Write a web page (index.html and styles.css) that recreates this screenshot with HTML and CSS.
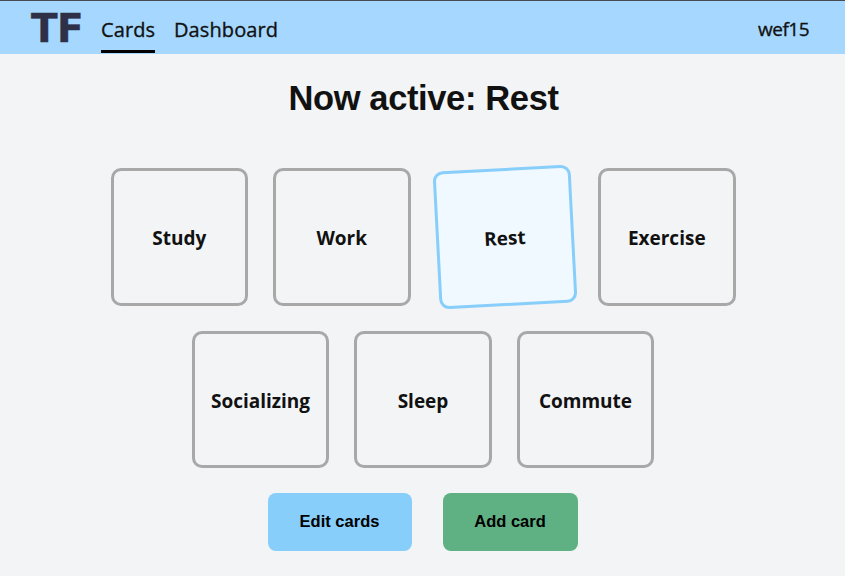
FILE: index.html
```html
<!DOCTYPE html>
<html lang="en">
<head>
<meta charset="utf-8">
<title>Cards</title>
<link rel="stylesheet" href="styles.css">
</head>
<body>
<header class="navbar">
  <a class="logo">TF</a>
  <nav class="links">
    <a class="link active">Cards</a>
    <a class="link">Dashboard</a>
  </nav>
  <span class="user">wef15</span>
</header>
<main>
  <h1>Now active: Rest</h1>
  <section class="cards">
    <div class="card">Study</div>
    <div class="card">Work</div>
    <div class="card selected">Rest</div>
    <div class="card">Exercise</div>
    <div class="card">Socializing</div>
    <div class="card">Sleep</div>
    <div class="card">Commute</div>
  </section>
  <div class="actions">
    <button class="btn edit">Edit cards</button>
    <button class="btn add">Add card</button>
  </div>
</main>
</body>
</html>
```
FILE: styles.css
```css
* { box-sizing: border-box; }
body {
  margin: 0;
  height: 576px;
  overflow: hidden;
  background: #f3f4f6;
  color: #111;
  font-family: "Open Sans", "Noto Sans", sans-serif;
}
.navbar {
  display: flex;
  height: 54px;
  padding: 0 36px 0 31px;
  border-top: 1px solid #484c52;
  background: #a6d8ff;
}
.logo {
  width: 70px;
  font: bold 39px/55px "DejaVu Sans", sans-serif;
  letter-spacing: -0.5px;
  color: #2d3047;
  -webkit-text-stroke: 0.4px #2d3047;
}
.links { display: flex; gap: 19px; flex: 1; }
.link {
  height: 52px;
  font-size: 20px;
  letter-spacing: 0.1px;
  line-height: 57px;
  border-bottom: 3px solid transparent;
  -webkit-text-stroke: 0.35px #111;
}
.link.active { width: 54px; border-color: #000; }
.user {
  font-size: 19px;
  letter-spacing: -0.5px;
  line-height: 57px;
  -webkit-text-stroke: 0.35px #111;
}
h1 {
  margin: 22px 0 0 2px;
  text-align: center;
  font: bold 34.5px/44px "Liberation Sans", Arial, sans-serif;
  letter-spacing: -0.37px;
}
.cards {
  display: flex;
  flex-wrap: wrap;
  justify-content: center;
  gap: 25px;
  width: 641px;
  margin: 48px auto 0;
  padding-left: 1px;
}
.card {
  display: flex;
  align-items: center;
  justify-content: center;
  width: 137.5px;
  height: 137.5px;
  padding-top: 3px;
  border: 3px solid #a8a8a8;
  border-radius: 10px;
  font-size: 19px;
  font-weight: 700;
}
.card.selected {
  border-color: #87cefa;
  background: #f0f9ff;
  transform: rotate(-3deg);
}
.actions {
  display: flex;
  justify-content: center;
  gap: 31px;
  margin-top: 25px;
}
.btn {
  height: 58px;
  padding: 0 0 2px;
  border: 0;
  border-radius: 8px;
  font: bold 16.5px "Liberation Sans", Arial, sans-serif;
  color: #000;
}
.edit { width: 144px; background: #87cefa; }
.add { width: 135px; background: #5fb183; }
```
